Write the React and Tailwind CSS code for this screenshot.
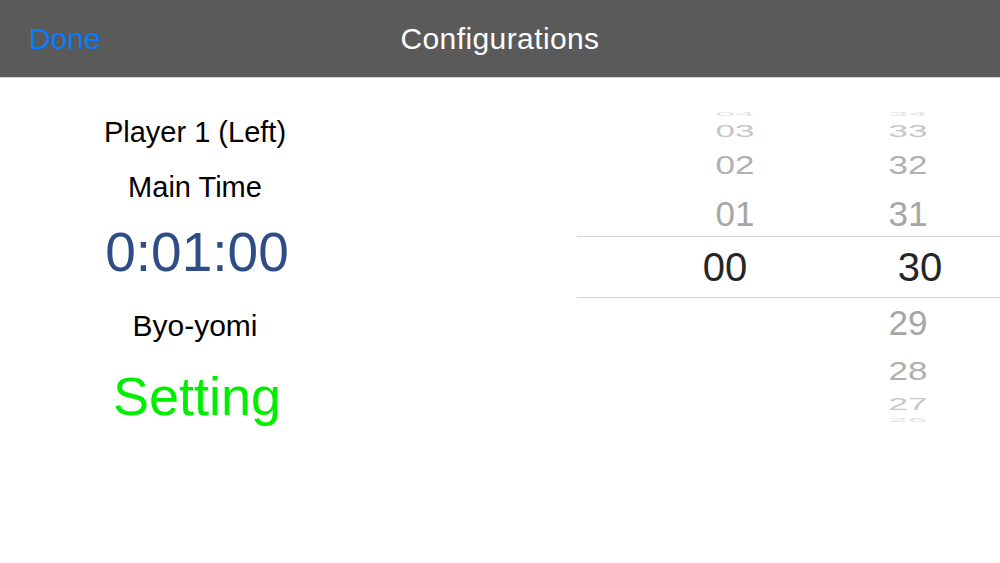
const font = { fontFamily: '"Liberation Sans", Arial, sans-serif' };

const above = [
  { l: '04', r: '34', h: 'h-[18px]', s: 'scale-y-[0.15]', c: 'text-[#e2e2e2]' },
  { l: '03', r: '33', h: 'h-[16px]', s: 'scale-y-[0.47]', c: 'text-[#c6c6c6]' },
  { l: '02', r: '32', h: 'h-[51px]', s: 'scale-y-[0.76]', c: 'text-[#b0b0b0]' },
  { l: '01', r: '31', h: 'h-[46px]', s: 'scale-y-100', c: 'text-[#a6a6a6]' },
];

const below = [
  { r: '29', h: 'h-[49px]', s: 'scale-y-100', c: 'text-[#a6a6a6]' },
  { r: '28', h: 'h-[47px]', s: 'scale-y-[0.73]', c: 'text-[#b0b0b0]' },
  { r: '27', h: 'h-[20px]', s: 'scale-y-[0.47]', c: 'text-[#c6c6c6]' },
  { r: '26', h: 'h-[12px]', s: 'scale-y-[0.15]', c: 'text-[#e2e2e2]' },
];

const PickerRow = ({ row }) => (
  <div className={`flex items-center ${row.h}`}>
    <div className={`ml-[118px] w-[80px] text-center text-[35px] leading-none ${row.c}`}>
      {row.l && <span className={`inline-block ${row.s}`}>{row.l}</span>}
    </div>
    <div className={`ml-[93px] w-[80px] text-center text-[35px] leading-none ${row.c}`}>
      <span className={`inline-block ${row.s}`}>{row.r}</span>
    </div>
  </div>
);

export default function App() {
  return (
    <div className="w-[1000px] h-[563px] bg-white overflow-hidden" style={font}>
      {/* Nav bar */}
      <div className="h-[78px] bg-[#5a5a5a] border-b border-[#cfcfcf] flex items-center relative">
        <button className="ml-[29px] text-[30px] text-[#0a7aff] leading-none">Done</button>
        <div className="absolute left-0 right-0 text-center text-white text-[30px] tracking-[0.4px] leading-none pointer-events-none">
          Configurations
        </div>
      </div>

      <div className="flex">
        {/* Left info column */}
        <div className="w-[390px] flex flex-col items-center pt-[27px] text-black">
          <div className="h-[55px] leading-[55px] text-[29px]">Player 1 (Left)</div>
          <div className="h-[55px] leading-[55px] text-[29px]">Main Time</div>
          <div className="h-[75px] leading-[75px] text-[55px] text-[#2e4c86] ml-[4px]">0:01:00</div>
          <div className="h-[72px] leading-[72px] text-[30px]">Byo-yomi</div>
          <div className="h-[69px] leading-[69px] text-[54px] text-[#00ee00] ml-[4px]">Setting</div>
        </div>

        {/* Picker */}
        <div className="ml-auto w-[423px] pt-[27px]">
          {above.map((row) => (
            <PickerRow key={row.r} row={row} />
          ))}
          <div className="h-[62px] border-y border-[#d2d2d2] flex items-center text-[40px] text-[#262626] leading-none">
            <div className="ml-[108px] w-[80px] text-center">00</div>
            <div className="ml-[115px] w-[80px] text-center">30</div>
          </div>
          {below.map((row) => (
            <PickerRow key={row.r} row={row} />
          ))}
        </div>
      </div>
    </div>
  );
}
